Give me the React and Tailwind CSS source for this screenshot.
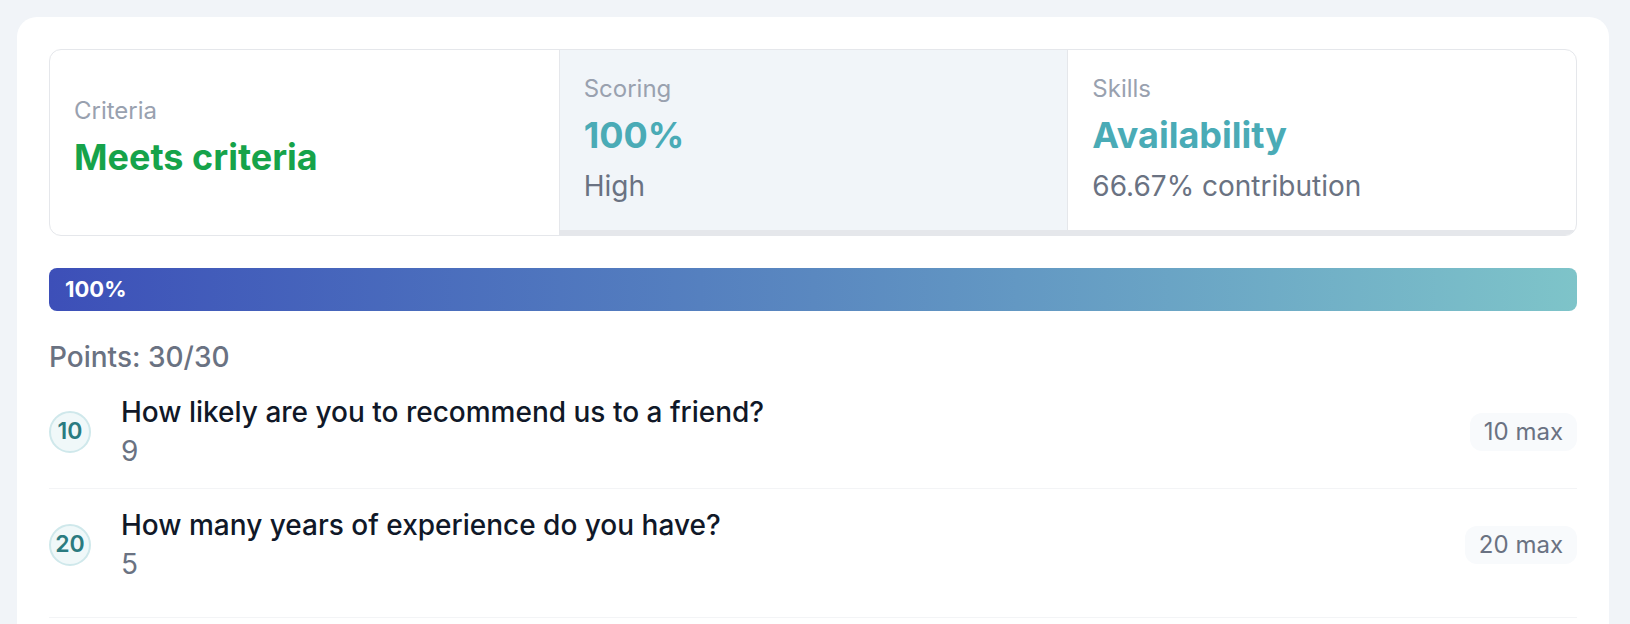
import React from 'react';

const questions = [
  { points: 10, text: 'How likely are you to recommend us to a friend?', answer: '9', max: 10 },
  { points: 20, text: 'How many years of experience do you have?', answer: '5', max: 20 },
];

export default function App() {
  return (
    <div className="min-h-screen bg-[#f1f4f8] pl-[17px] pr-[21px] pt-[17px] font-['Inter',sans-serif]">
      <div className="bg-white rounded-[20px] px-8 pt-8 pb-10">
        {/* Summary */}
        <div className="grid grid-cols-3 border border-gray-200 rounded-xl overflow-hidden">
          <div className="flex flex-col justify-center px-6 pb-[14px]">
            <div className="text-[24px] leading-8 text-gray-400">Criteria</div>
            <div className="mt-[10px] text-[36px] leading-10 font-bold text-[#16a34a]">Meets criteria</div>
          </div>
          <div className="flex flex-col justify-center px-6 pt-[23px] pb-[26px] bg-[#f1f5f9] border-l border-gray-200 border-b-[5px]">
            <div className="text-[24px] leading-8 text-gray-400">Scoring</div>
            <div className="mt-[10px] text-[36px] leading-10 font-bold text-[#4aabb6]">100%</div>
            <div className="mt-[13px] text-[28px] leading-9 text-gray-500">High</div>
          </div>
          <div className="flex flex-col justify-center px-6 pt-[23px] pb-[26px] border-l border-gray-200 border-b-[5px]">
            <div className="text-[24px] leading-8 text-gray-400">Skills</div>
            <div className="mt-[10px] text-[36px] leading-10 font-bold text-[#4aabb6]">Availability</div>
            <div className="mt-[13px] text-[28px] leading-9 text-gray-500">66.67% contribution</div>
          </div>
        </div>

        {/* Progress */}
        <div className="mt-8 h-[43px] rounded-lg bg-gradient-to-r from-[#3d4fb8] via-[#5a88c0] to-[#7ec4c9] flex items-center px-4">
          <span className="text-white font-bold text-[22px]">100%</span>
        </div>

        <div className="mt-[28px] text-[28px] leading-9 font-medium text-gray-500">Points: 30/30</div>

        {/* Questions */}
        <div>
          {questions.map((q, i) => (
            <div
              key={i}
              className={`flex items-center gap-[30px] border-b border-gray-100 ${
                i === 0 ? 'pt-[19px] pb-[19px]' : 'pt-[18px] pb-[35px]'
              }`}
            >
              <div className="w-[42px] h-[42px] shrink-0 rounded-full border-2 border-[#cfe8eb] bg-[#f0f8f9] flex items-center justify-center text-[23px] font-semibold text-[#2a7b80]">
                {q.points}
              </div>
              <div className="flex-1">
                <div className="text-[28px] leading-9 font-medium text-gray-900">{q.text}</div>
                <div className="mt-[3px] text-[28px] leading-9 text-gray-500">{q.answer}</div>
              </div>
              <div className="px-[14px] h-[38px] flex items-center rounded-xl bg-[#f8fafc] text-[24px] text-gray-500">
                {q.max} max
              </div>
            </div>
          ))}
        </div>
      </div>
    </div>
  );
}
